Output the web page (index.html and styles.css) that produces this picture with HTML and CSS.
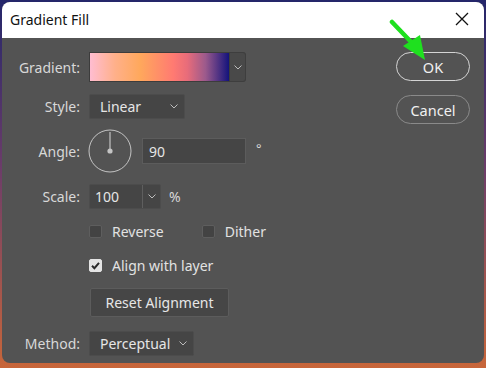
FILE: index.html
```html
<!DOCTYPE html>
<html lang="en">
<head>
  <meta charset="UTF-8" />
  <title>Gradient Fill</title>
  <link rel="stylesheet" href="styles.css">
</head>
<body>
  <div class="window">
    <div class="titlebar">
      <span class="title">Gradient Fill</span>
      <svg class="close" width="14" height="14" viewBox="0 0 14 14">
        <path d="M1 1 L13 13 M13 1 L1 13" stroke="#111" stroke-width="1.3" fill="none"/>
      </svg>
    </div>

    <div class="content">
      <div class="form">
        <div class="row r-gradient">
          <label class="label">Gradient:</label>
          <div class="swatch"></div>
          <div class="swatch-arrow">
            <svg width="8" height="5" viewBox="0 0 8 5"><path d="M0.5 0.5 L4 4 L7.5 0.5" stroke="#bdbdbd" fill="none"/></svg>
          </div>
        </div>

        <div class="row r-style">
          <label class="label">Style:</label>
          <div class="select style-select">
            <span>Linear</span>
            <svg width="8" height="5" viewBox="0 0 8 5"><path d="M0.5 0.5 L4 4 L7.5 0.5" stroke="#bdbdbd" fill="none"/></svg>
          </div>
        </div>

        <div class="row r-angle">
          <label class="label">Angle:</label>
          <svg class="dial" width="44" height="44" viewBox="0 0 44 44">
            <circle cx="22" cy="22" r="21" stroke="#c4c4c4" stroke-width="1" fill="none"/>
            <line x1="22" y1="3" x2="22" y2="22" stroke="#c4c4c4" stroke-width="1.2"/>
            <circle cx="22" cy="22" r="2.6" fill="#c4c4c4"/>
          </svg>
          <div class="field angle-field">90</div>
          <span class="unit deg">°</span>
        </div>

        <div class="row r-scale">
          <label class="label">Scale:</label>
          <div class="combo">
            <span class="combo-text">100</span>
            <span class="combo-arrow">
              <svg width="8" height="5" viewBox="0 0 8 5"><path d="M0.5 0.5 L4 4 L7.5 0.5" stroke="#bdbdbd" fill="none"/></svg>
            </span>
          </div>
          <span class="unit">%</span>
        </div>

        <div class="row r-checks">
          <label class="check"><span class="box"></span>Reverse</label>
          <label class="check dither"><span class="box"></span>Dither</label>
        </div>

        <div class="row r-align">
          <label class="check">
            <span class="box checked">
              <svg width="13" height="13" viewBox="0 0 13 13"><path d="M3 6.8 L5.4 9.2 L10 3.8" stroke="#2b2b2b" stroke-width="2" fill="none"/></svg>
            </span>Align with layer
          </label>
        </div>

        <div class="row r-reset">
          <button class="btn-reset">Reset Alignment</button>
        </div>

        <div class="row r-method">
          <label class="label">Method:</label>
          <div class="select method-select">
            <span>Perceptual</span>
            <svg width="8" height="5" viewBox="0 0 8 5"><path d="M0.5 0.5 L4 4 L7.5 0.5" stroke="#bdbdbd" fill="none"/></svg>
          </div>
        </div>
      </div>

      <div class="actions">
        <button class="pill ok">OK</button>
        <button class="pill cancel">Cancel</button>
      </div>
    </div>

    <svg class="pointer" width="50" height="50" viewBox="0 0 50 50">
      <line x1="3" y1="3" x2="25" y2="26" stroke="#1fe01f" stroke-width="4.5" stroke-linecap="round"/>
      <polygon points="14,27 31,16 36,41" fill="#1fe01f"/>
    </svg>
  </div>
</body>
</html>
```

FILE: styles.css
```css
html, body {
  margin: 0;
  height: 100%;
}

body {
  background: linear-gradient(180deg, #24266a 0%, #6b3c6a 45%, #c8663a 100%);
  font-family: 'Noto Sans', 'Open Sans', sans-serif;
  font-size: 14px;
  overflow: hidden;
}

.window {
  position: relative;
  margin: 2px 2px 0 2px;
  height: 361px;
  border-radius: 8px;
  overflow: hidden;
  background: #535353;
}

.titlebar {
  height: 36px;
  background: #fff;
  display: flex;
  align-items: center;
  padding: 0 14px 0 8px;
}

.title {
  color: #111;
  font-size: 14px;
  flex: 1;
  margin-top: -2px;
}

.close {
  margin-right: 1px;
  margin-top: -2px;
}

.content {
  display: flex;
  padding-right: 14px;
}

.form {
  flex: 1;
}

.row {
  display: flex;
  align-items: center;
  color: #e2e2e2;
}

.label {
  width: 78px;
  text-align: right;
  margin-right: 9px;
  color: #d8d8d8;
}

.r-gradient { margin-top: 14px; height: 30px; }
.r-style { margin-top: 12px; height: 25px; }
.r-angle { margin-top: 10px; height: 44px; }
.r-scale { margin-top: 11px; height: 25px; }
.r-checks { margin-top: 12px; height: 20px; padding-left: 87px; }
.r-align { margin-top: 14px; height: 20px; padding-left: 87px; }
.r-reset { margin-top: 13px; height: 29px; padding-left: 88px; }
.r-method { margin-top: 14px; height: 25px; }

.swatch {
  width: 139px;
  height: 28px;
  border: 1px solid #3c3c3c;
  background: linear-gradient(90deg, #ffbdd1 0%, #ffb08a 18%, #ffa85c 36%, #ff7a72 60%, #e86c7a 70%, #9c5a8c 83%, #13137c 100%);
}

.swatch-arrow {
  width: 15px;
  height: 28px;
  border: 1px solid #3e3e3e;
  border-left: none;
  border-radius: 0 3px 3px 0;
  background: #494949;
  display: flex;
  align-items: center;
  justify-content: center;
}

.select {
  height: 23px;
  border: 1px solid #4c4c4c;
  border-radius: 2px;
  background: #454545;
  display: flex;
  align-items: center;
  justify-content: space-between;
  padding: 0 6px 0 10px;
  color: #e6e6e6;
}

.style-select { width: 78px; }
.method-select { width: 87px; }

.dial {
  margin-left: -1px;
}

.field {
  height: 24px;
  border: 1px solid #5c5c5c;
  background: #454545;
  display: flex;
  align-items: center;
  padding-left: 6px;
  color: #e6e6e6;
}

.angle-field {
  width: 96px;
  margin-left: 10px;
}

.unit {
  margin-left: 8px;
  color: #d8d8d8;
}

.deg {
  margin-left: 10px;
  margin-top: -6px;
  font-size: 13px;
}

.combo {
  display: flex;
  height: 23px;
  border: 1px solid #4c4c4c;
  border-radius: 2px;
  background: #454545;
}

.combo-text {
  width: 47px;
  padding-left: 5px;
  display: flex;
  align-items: center;
  border-right: 1px solid #5e5e5e;
  color: #e6e6e6;
}

.combo-arrow {
  width: 17px;
  display: flex;
  align-items: center;
  justify-content: center;
}

.check {
  display: flex;
  align-items: center;
  color: #e2e2e2;
}

.box {
  width: 13px;
  height: 13px;
  box-sizing: border-box;
  border: 1px solid #5e5e5e;
  border-radius: 2px;
  background: #434343;
  margin-right: 10px;
  display: flex;
}

.box.checked {
  background: #e4e4e4;
  border-color: #e4e4e4;
}

.box.checked svg {
  margin: -1px;
}

.dither {
  margin-left: 38px;
}

.btn-reset {
  height: 29px;
  width: 139px;
  border: 1px solid #5c5c5c;
  border-radius: 2px;
  background: #464646;
  color: #e6e6e6;
  font-family: inherit;
  font-size: 14px;
  padding: 0;
}

.actions {
  display: flex;
  flex-direction: column;
  padding-top: 14px;
}

.pill {
  width: 74px;
  height: 29px;
  border-radius: 15px;
  background: transparent;
  font-family: inherit;
  font-size: 14.5px;
  color: #f0f0f0;
  padding: 0;
}

.ok {
  border: 1.5px solid #d4d4d4;
}

.cancel {
  margin-top: 14px;
  border: 1px solid #8a8a8a;
}

.pointer {
  position: absolute;
  left: 387px;
  top: 17px;
}
```
